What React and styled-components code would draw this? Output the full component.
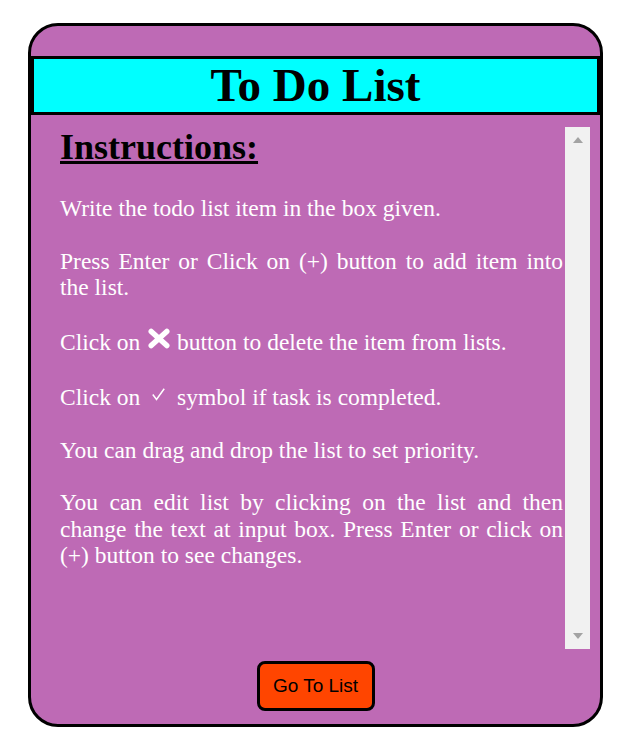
import React from "react";
import styled, { createGlobalStyle } from "styled-components";

const GlobalStyle = createGlobalStyle`
  html, body {
    margin: 0;
    padding: 0;
    background: #fff;
  }
  body {
    font-family: "Liberation Serif", "Times New Roman", serif;
  }
`;

const Page = styled.div`
  padding: 23px 0 0 28px;
`;

const Card = styled.div`
  width: 569px;
  box-sizing: content-box;
  border: 3px solid #000;
  border-radius: 30px;
  background-color: #be6ab5;
  padding: 30px 0 13px;
  display: flex;
  flex-direction: column;
  align-items: stretch;
  gap: 12px;
`;

const Header = styled.h1`
  margin: 0;
  background-color: #00ffff;
  border: 3px solid #000;
  text-align: center;
  font-size: 47px;
  line-height: 53px;
  font-weight: 700;
  color: #000;
`;

const ScrollArea = styled.div`
  margin: 0 10px;
  height: 522px;
  display: flex;
`;

const Content = styled.div`
  flex: 1;
  overflow-y: auto;
  padding: 0 2px 0 19px;
  color: #fff;
  font-size: 23.5px;
  line-height: 26.5px;
  text-align: justify;
`;

const Track = styled.div`
  width: 25px;
  flex-shrink: 0;
  background: #f1f1f1;
  display: flex;
  flex-direction: column;
  justify-content: space-between;
`;

const Arrow = styled.div`
  height: 25px;
  display: flex;
  align-items: center;
  justify-content: center;

  &::before {
    content: "";
    width: 0;
    height: 0;
    border-left: 5.5px solid transparent;
    border-right: 5.5px solid transparent;
    ${(p) =>
      p.$down
        ? "border-top: 6px solid #a3a3a3; margin-top: -1px;"
        : "border-bottom: 6px solid #a3a3a3;"}
  }
`;

const Heading = styled.h2`
  margin: 0 0 27px;
  color: #000;
  font-size: 36px;
  line-height: 41px;
  font-weight: 700;
  text-decoration: underline;
  text-align: left;
`;

const Para = styled.p`
  margin: 0 0 26px;
`;

const Icon = styled.svg`
  display: inline-block;
  vertical-align: ${(p) => p.$align};
  margin: ${(p) => p.$margin};
`;

const Footer = styled.div`
  display: flex;
  justify-content: center;
`;

const GoButton = styled.button`
  width: 118px;
  height: 50px;
  box-sizing: border-box;
  border: 3px solid #000;
  border-radius: 8px;
  background-color: #ff4500;
  color: #000;
  font-family: "Liberation Sans", Arial, sans-serif;
  font-size: 19px;
  padding: 0;
  cursor: pointer;
`;

const CrossIcon = () => (
  <Icon
    width="24"
    height="21"
    viewBox="0 0 24 21"
    $align="1px"
    $margin="1px 0 0 1px"
  >
    <path
      d="M4.2 3.4 L19.8 17.6 M19.8 3.4 L4.2 17.6"
      stroke="#fff"
      strokeWidth="5.4"
      strokeLinecap="round"
      fill="none"
    />
  </Icon>
);

const CheckIcon = () => (
  <Icon
    width="13"
    height="13"
    viewBox="0 0 13 13"
    $align="4px"
    $margin="7px 6px 0 6px"
  >
    <path
      d="M0.8 6.5 L4.5 11.5 L12.2 0.8"
      stroke="#fff"
      strokeWidth="1.5"
      fill="none"
    />
  </Icon>
);

const App = () => {
  return (
    <Page>
      <GlobalStyle />
      <Card>
        <Header>To Do List</Header>
        <ScrollArea>
          <Content>
            <Heading>Instructions:</Heading>
            <Para>Write the todo list item in the box given.</Para>
            <Para>
              Press Enter or Click on (+) button to add item into the list.
            </Para>
            <Para>
              Click on <CrossIcon /> button to delete the item from lists.
            </Para>
            <Para>
              Click on <CheckIcon /> symbol if task is completed.
            </Para>
            <Para>You can drag and drop the list to set priority.</Para>
            <Para>
              You can edit list by clicking on the list and then change the
              text at input box. Press Enter or click on (+) button to see
              changes.
            </Para>
          </Content>
          <Track>
            <Arrow />
            <Arrow $down />
          </Track>
        </ScrollArea>
        <Footer>
          <GoButton>Go To List</GoButton>
        </Footer>
      </Card>
    </Page>
  );
};

export default App;
